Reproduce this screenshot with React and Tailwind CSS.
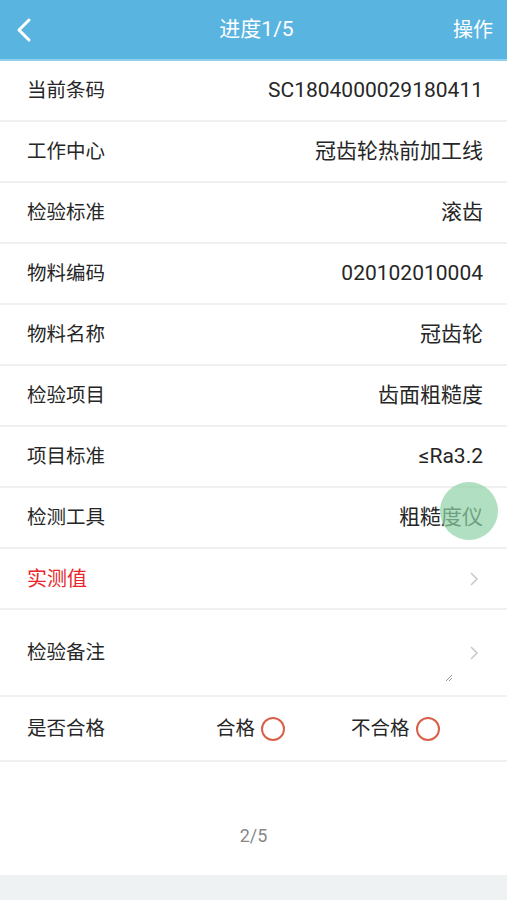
import React from 'react';

const rows = [
    ['当前条码', 'SC1804000029180411'],
    ['工作中心', '冠齿轮热前加工线'],
    ['检验标准', '滚齿'],
    ['物料编码', '020102010004'],
    ['物料名称', '冠齿轮'],
    ['检验项目', '齿面粗糙度'],
    ['项目标准', '≤Ra3.2'],
    ['检测工具', '粗糙度仪'],
];

const Chevron = () => (
    <svg width="10" height="16" viewBox="0 0 10 16" className="text-[#c8c8c8]">
        <path d="M2 2l6 6-6 6" fill="none" stroke="currentColor" strokeWidth="1.5" />
    </svg>
);

const Radio = () => (
    <span className="inline-block w-[24px] h-[24px] rounded-full border-2 border-[#d9614a] ml-[6px]"></span>
);

export default function App() {
    return (
        <div className="w-[507px] h-[900px] bg-white flex flex-col text-[#262626] overflow-hidden" style={{ fontFamily: 'Roboto, "Noto Sans CJK SC", sans-serif' }}>
            {/* Header */}
            <div className="h-[61px] bg-[#5ab4e0] border-b-2 border-[#8fd0ee] flex items-center justify-between px-[14px] text-white shrink-0">
                <svg width="20" height="26" viewBox="0 0 20 26">
                    <path d="M15 3L5 13l10 10" fill="none" stroke="white" strokeWidth="3" strokeLinecap="round" strokeLinejoin="round" />
                </svg>
                <div className="text-[21px] pl-[26px]">进度1/5</div>
                <div className="text-[20px]">操作</div>
            </div>

            {/* Info rows */}
            {rows.map(([label, value], i) => (
                <div key={i} className="h-[61px] shrink-0 flex items-center justify-between pl-[27px] pr-[24px] border-b-2 border-[#f0f0f0] relative">
                    <span className="text-[19.5px]">{label}</span>
                    <span className="text-[21px]">{value}</span>
                    {label === '检测工具' && (
                        <span className="absolute right-[9px] top-[-6px] w-[58px] h-[58px] rounded-full bg-[#8fd3a6] opacity-70"></span>
                    )}
                </div>
            ))}

            <div className="h-[61px] shrink-0 flex items-center justify-between pl-[27px] pr-[28px] border-b-2 border-[#f0f0f0] text-[20px]">
                <span className="text-[#e8252b]">实测值</span>
                <Chevron />
            </div>

            <div className="h-[87px] shrink-0 flex items-center justify-between pl-[27px] pr-[28px] border-b-2 border-[#f0f0f0] text-[19.5px] relative">
                <span>检验备注</span>
                <Chevron />
                <svg width="6" height="6" viewBox="0 0 6 6" className="absolute right-[55px] bottom-[14px]">
                    <path d="M0 6L6 0M3 6L6 3" stroke="#999" strokeWidth="1" />
                </svg>
            </div>

            <div className="h-[65px] shrink-0 flex items-center pl-[27px] border-b-2 border-[#f0f0f0] text-[19.5px]">
                <span className="w-[189px]">是否合格</span>
                <span className="flex items-center w-[135px]">合格<Radio /></span>
                <span className="flex items-center">不合格<Radio /></span>
            </div>

            <div className="flex-1 flex items-end justify-center pb-[26px]">
                <span className="text-[18px] text-[#888]">2/5</span>
            </div>

            <div className="h-[25px] bg-[#eef2f2] shrink-0"></div>
        </div>
    );
}
